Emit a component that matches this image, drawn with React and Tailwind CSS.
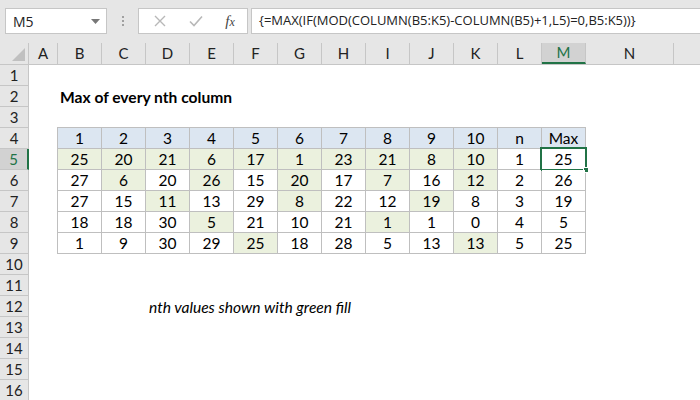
import React from "react";

const COLS = [
  { l: "A", w: "w-[29px]" },
  { l: "B", w: "w-[44px]" },
  { l: "C", w: "w-[44px]" },
  { l: "D", w: "w-[44px]" },
  { l: "E", w: "w-[44px]" },
  { l: "F", w: "w-[44px]" },
  { l: "G", w: "w-[44px]" },
  { l: "H", w: "w-[44px]" },
  { l: "I", w: "w-[44px]" },
  { l: "J", w: "w-[44px]" },
  { l: "K", w: "w-[44px]" },
  { l: "L", w: "w-[44px]" },
  { l: "M", w: "w-[44px]" },
  { l: "N", w: "w-[88px]" },
];

const DATA = [
  [25, 20, 21, 6, 17, 1, 23, 21, 8, 10, 1, 25],
  [27, 6, 20, 26, 15, 20, 17, 7, 16, 12, 2, 26],
  [27, 15, 11, 13, 29, 8, 22, 12, 19, 8, 3, 19],
  [18, 18, 30, 5, 21, 10, 21, 1, 1, 0, 4, 5],
  [1, 9, 30, 29, 25, 18, 28, 5, 13, 13, 5, 25],
];

const HEAD = ["1", "2", "3", "4", "5", "6", "7", "8", "9", "10", "n", "Max"];

const font = "font-['Lato','Liberation_Sans',sans-serif]";

function Cell({ children, bg, selected }) {
  return (
    <div className={`relative flex items-end justify-center pb-[1px] ${bg} text-[15.5px] leading-none text-black`}>
      <span className="translate-y-[-1px]">{children}</span>
      {selected && (
        <div className="absolute -left-[2px] -top-[2px] -right-[2px] -bottom-[2px] border-2 border-[#217346]">
          <div className="absolute -right-[4px] -bottom-[4px] w-[6px] h-[6px] bg-[#217346] border border-white" />
        </div>
      )}
    </div>
  );
}

export default function App() {
  return (
    <div className={`w-[700px] h-[400px] overflow-hidden bg-white ${font}`}>
      {/* Toolbar */}
      <div className="h-[43px] bg-[#e6e6e6] flex items-start pt-[8px]">
        <div className="ml-[5px] w-[102px] h-[26px] bg-white border border-[#c6c6c6] flex items-center justify-between pl-[7px] pr-[6px] font-['Open_Sans',sans-serif] text-[14px] text-[#222]">
          <span>M5</span>
          <svg width="9" height="5" viewBox="0 0 9 5"><path d="M0 0h9L4.5 5z" fill="#777" /></svg>
        </div>
        <div className="w-[31px] h-[26px] flex flex-col items-center justify-center gap-[2px]">
          <div className="w-[2px] h-[2px] bg-[#a0a0a0]" />
          <div className="w-[2px] h-[2px] bg-[#a0a0a0]" />
          <div className="w-[2px] h-[2px] bg-[#a0a0a0]" />
        </div>
        <div className="w-[110px] h-[26px] bg-white border border-[#c6c6c6] flex items-center">
          <div className="w-[38px] flex justify-center ml-[2px]">
            <svg width="12" height="12" viewBox="0 0 12 12"><path d="M1 1l10 10M11 1L1 11" stroke="#b8b8b8" strokeWidth="1.4" /></svg>
          </div>
          <div className="w-[34px] flex justify-center">
            <svg width="14" height="12" viewBox="0 0 14 12"><path d="M1 6.5l4 4L13 1.5" stroke="#b8b8b8" strokeWidth="1.6" fill="none" /></svg>
          </div>
          <div className="w-[34px] flex justify-center font-['Liberation_Serif',serif] italic text-[15px] text-[#444]">
            <span>f<span className="text-[12px]">x</span></span>
          </div>
        </div>
        <div className="ml-[3px] flex-1 h-[26px] bg-white border border-r-0 border-[#c6c6c6] flex items-center pl-[7px] font-['Open_Sans',sans-serif] text-[13px] text-[#222] whitespace-nowrap">
          {"{=MAX(IF(MOD(COLUMN(B5:K5)-COLUMN(B5)+1,L5)=0,B5:K5))}"}
        </div>
      </div>

      {/* Column headers */}
      <div className="h-[22px] flex bg-[#e6e6e6] border-b border-[#c6c6c6]">
        <div className="w-[29px] h-full border-r border-[#c6c6c6] relative">
          <svg className="absolute right-[3px] bottom-[3px]" width="13" height="13" viewBox="0 0 13 13"><path d="M13 0V13H0z" fill="#c0c0c0" /></svg>
        </div>
        {COLS.map((c) => (
          <div
            key={c.l}
            className={`${c.w} h-full flex items-center justify-center border-r text-[15px] ${
              c.l === "M"
                ? "bg-[#d2d2d2] border-r-[#c6c6c6] text-[#217346] border-b-2 border-b-[#217346]"
                : "border-[#c6c6c6] text-[#222]"
            }`}
          >
            {c.l}
          </div>
        ))}
        <div className="flex-1" />
      </div>

      {/* Body */}
      <div className="grid grid-cols-[29px_29px_repeat(12,44px)_88px_1fr] grid-rows-[repeat(16,21px)]">
        {Array.from({ length: 16 }, (_, i) => (
          <div
            key={i}
            style={{ gridRow: i + 1 }}
            className={`col-start-1 flex items-center justify-center border-b border-[#c6c6c6] text-[15px] ${
              i === 4
                ? "bg-[#d2d2d2] text-[#217346] border-r-2 border-r-[#217346]"
                : "bg-[#e6e6e6] text-[#222] border-r"
            }`}
          >
            {i + 1}
          </div>
        ))}

        <div className="col-start-3 col-span-8 row-start-2 flex items-center pl-[2px] pt-[2px] font-bold text-[15.6px] text-black whitespace-nowrap">
          Max of every nth column
        </div>

        <div className="col-start-3 row-start-4 row-span-6 -ml-px -mt-px w-[529px] h-[127px] self-start justify-self-start bg-[#bfbfbf] p-px grid grid-cols-[repeat(12,43px)] grid-rows-[repeat(6,20px)] gap-px">
          {HEAD.map((h) => (
            <Cell key={h} bg="bg-[#dce6f1]">{h}</Cell>
          ))}
          {DATA.map((row, r) =>
            row.map((v, c) => {
              const n = r + 1;
              const green = c < 10 && (c + 1) % n === 0;
              return (
                <Cell key={`${r}-${c}`} bg={green ? "bg-[#ebf1de]" : "bg-white"} selected={r === 0 && c === 11}>
                  {v}
                </Cell>
              );
            })
          )}
        </div>

        <div className="col-start-5 col-span-8 row-start-12 flex items-center pl-[3px] pt-[2px] italic text-[15.6px] text-black whitespace-nowrap">
          nth values shown with green fill
        </div>
      </div>
    </div>
  );
}
